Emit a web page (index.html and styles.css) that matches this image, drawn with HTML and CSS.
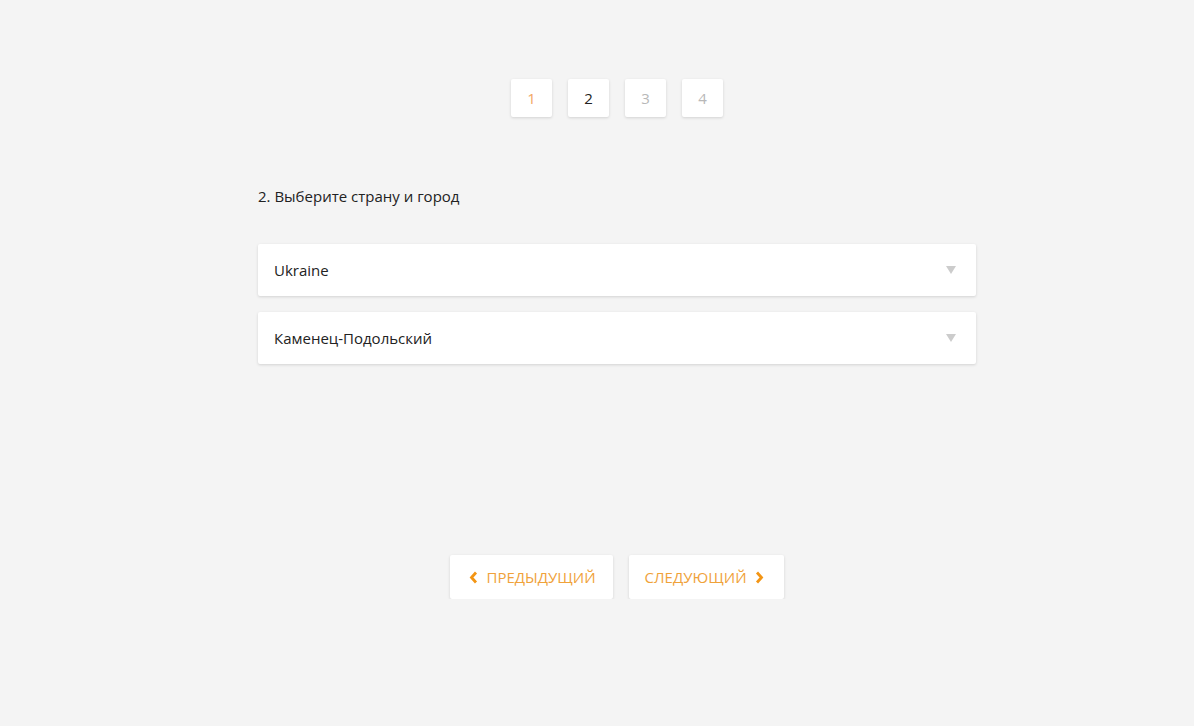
FILE: index.html
```html
<!DOCTYPE html>
<html lang="ru">
<head>
<meta charset="utf-8">
<link rel="stylesheet" href="styles.css">
</head>
<body>
<div class="page">
  <nav class="steps">
    <span class="step step-done">1</span>
    <span class="step step-active">2</span>
    <span class="step step-future">3</span>
    <span class="step step-future">4</span>
  </nav>
  <h2 class="question">2. Выберите страну и город</h2>
  <div class="selects">
    <div class="select">
      <span class="select-value">Ukraine</span>
      <svg class="caret" width="10" height="8" viewBox="0 0 10 8"><path d="M0 0H10L5 8Z" fill="#cccccc"/></svg>
    </div>
    <div class="select">
      <span class="select-value">Каменец-Подольский</span>
      <svg class="caret" width="10" height="8" viewBox="0 0 10 8"><path d="M0 0H10L5 8Z" fill="#cccccc"/></svg>
    </div>
  </div>
  <div class="nav">
    <button class="nav-btn nav-prev">
      <svg class="chev" width="9" height="13" viewBox="0 0 9 13"><path d="M7 1.5L2.5 6.5L7 11.5" fill="none" stroke="currentColor" stroke-width="2.8" stroke-linejoin="miter"/></svg>
      <span>Предыдущий</span>
    </button>
    <button class="nav-btn nav-next">
      <span>Следующий</span>
      <svg class="chev" width="9" height="13" viewBox="0 0 9 13"><path d="M2 1.5L6.5 6.5L2 11.5" fill="none" stroke="currentColor" stroke-width="2.8" stroke-linejoin="miter"/></svg>
    </button>
  </div>
</div>
</body>
</html>
```
FILE: styles.css
```css
html, body {
  margin: 0;
  padding: 0;
}
body {
  background: #f4f4f4;
  font-family: "Open Sans", "Noto Sans", sans-serif;
  color: #222;
  padding-left: 40px;
}
.page {
  width: 718px;
  margin: 0 auto;
  padding-top: 79px;
}
.steps {
  display: flex;
  justify-content: center;
  gap: 16px;
}
.step {
  width: 41px;
  height: 38px;
  background: #fff;
  box-shadow: 0 1px 3px rgba(0,0,0,0.14);
  border-radius: 2px;
  display: flex;
  align-items: center;
  justify-content: center;
  font-size: 15px;
}
.step-done { color: #f2a664; }
.step-active { color: #222; }
.step-future { color: #b8b8b8; }
.question {
  margin: 69px 0 0;
  font-size: 15px;
  font-weight: 400;
  line-height: 20px;
  color: #222;
}
.selects {
  margin-top: 38px;
  display: flex;
  flex-direction: column;
  gap: 16px;
}
.select {
  height: 52px;
  background: #fff;
  box-shadow: 0 1px 3px rgba(0,0,0,0.14);
  border-radius: 2px;
  display: flex;
  align-items: center;
  justify-content: space-between;
  padding: 0 20px 0 16px;
  font-size: 15px;
  color: #222;
}
.caret { display: block; }
.nav {
  margin-top: 191px;
  display: flex;
  justify-content: center;
  gap: 16px;
}
.nav-btn {
  height: 44px;
  background: #fff;
  border: none;
  box-shadow: 0 1px 3px rgba(0,0,0,0.14);
  border-radius: 2px;
  display: flex;
  align-items: center;
  gap: 8px;
  font-family: "Open Sans", "Noto Sans", sans-serif;
  font-size: 15px;
  text-transform: uppercase;
  color: #f0a23a;
  cursor: pointer;
}
.nav-btn .chev { color: #f39514; display: block; }
.nav-prev { padding: 0 17px 0 19px; }
.nav-next { padding: 0 20px 0 16px; }
```
